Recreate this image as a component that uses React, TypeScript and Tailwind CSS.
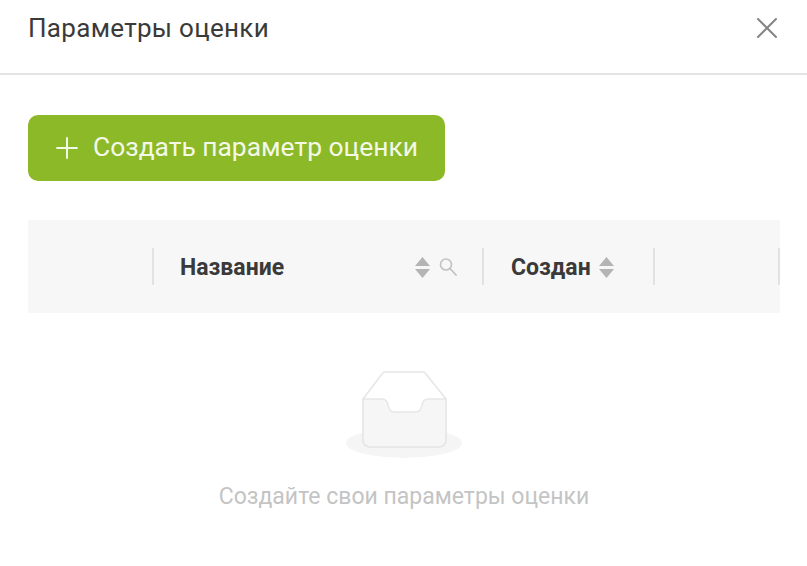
import { Plus } from "lucide-react";

function SortIcon() {
  return (
    <svg width="15" height="21" viewBox="0 0 15 21" className="shrink-0">
      <path d="M7.5 0 L15 9 L0 9 Z M0 12 L15 12 L7.5 21 Z" fill="#b4b4b4" />
    </svg>
  );
}

function CloseIcon() {
  return (
    <svg width="20" height="20" viewBox="0 0 20 20" className="mt-[5px] shrink-0">
      <path d="M1 1 L19 19 M19 1 L1 19" stroke="#858585" strokeWidth="2" strokeLinecap="round" />
    </svg>
  );
}

function SearchIcon() {
  return (
    <svg width="18" height="18" viewBox="0 0 18 18" className="ml-[9px] mb-[2px] shrink-0">
      <circle cx="7" cy="6.5" r="5.5" fill="none" stroke="#c2c2c2" strokeWidth="1.6" />
      <path d="M11 10.5 L17 17" stroke="#c2c2c2" strokeWidth="1.8" strokeLinecap="round" />
    </svg>
  );
}

function EmptyIcon() {
  return (
    <svg width="116" height="88" viewBox="0 0 116 88">
      <ellipse cx="58" cy="72" rx="58" ry="15" fill="#f5f5f5" />
      <path d="M17 28 L36 3 Q37 1 40 1 L76 1 Q79 1 80 3 L100 28 L100 68 Q100 76 92 76 L25 76 Q17 76 17 68 Z" fill="#ffffff" stroke="#e6e6e6" strokeWidth="1.5" />
      <path d="M17 28 L36 28 Q41 28 42 34 Q43 41 49 41 L69 41 Q75 41 76 34 Q77 28 82 28 L100 28 L100 68 Q100 76 92 76 L25 76 Q17 76 17 68 Z" fill="#f6f6f6" stroke="#e6e6e6" strokeWidth="1.5" />
    </svg>
  );
}

export default function App() {
  return (
    <div className="h-[566px] w-[807px] bg-white font-['Roboto',sans-serif]">
      <div className="flex h-[75px] items-start justify-between border-b-2 border-[#e4e4e4] pl-7 pr-[30px] pt-[13px]">
        <h1 className="text-[26px] leading-[30px] font-normal tracking-[0.3px] text-[#3a3a3a]">Параметры оценки</h1>
        <CloseIcon />
      </div>
      <div className="px-7 pt-[40px]">
        <button className="flex h-[66px] w-[417px] items-center gap-[9px] rounded-[10px] bg-[#8cb927] pl-[22px] text-[26.4px] text-[#f4f8e8]">
          <Plus className="size-[34px]" strokeWidth={1.4} />
          <span>Создать параметр оценки</span>
        </button>
        <div className="mt-[39px] flex h-[93px] w-[752px] items-center bg-[#f7f7f7] text-[23px] font-bold text-[#3a3a3a]">
          <div className="h-[37px] w-[126px] border-r-2 border-[#e2e2e2]" />
          <div className="flex h-[37px] w-[330px] items-center border-r-2 border-[#e2e2e2] pl-[26px] pt-[2px]">
            <span className="w-[235px] pt-[2px]">Название</span>
            <SortIcon />
            <SearchIcon />
          </div>
          <div className="flex h-[37px] w-[171px] items-center gap-[8px] border-r-2 border-[#e2e2e2] pl-[27px] pt-[2px]">
            <span className="pt-[2px]">Создан</span>
            <SortIcon />
          </div>
          <div className="h-[37px] w-[125px] border-r-2 border-[#e2e2e2]" />
        </div>
        <div className="mt-[58px] flex w-[752px] flex-col items-center">
          <EmptyIcon />
          <p className="mt-[24px] text-[23px] leading-[28px] text-[#c4c4c4]">Создайте свои параметры оценки</p>
        </div>
      </div>
    </div>
  );
}
